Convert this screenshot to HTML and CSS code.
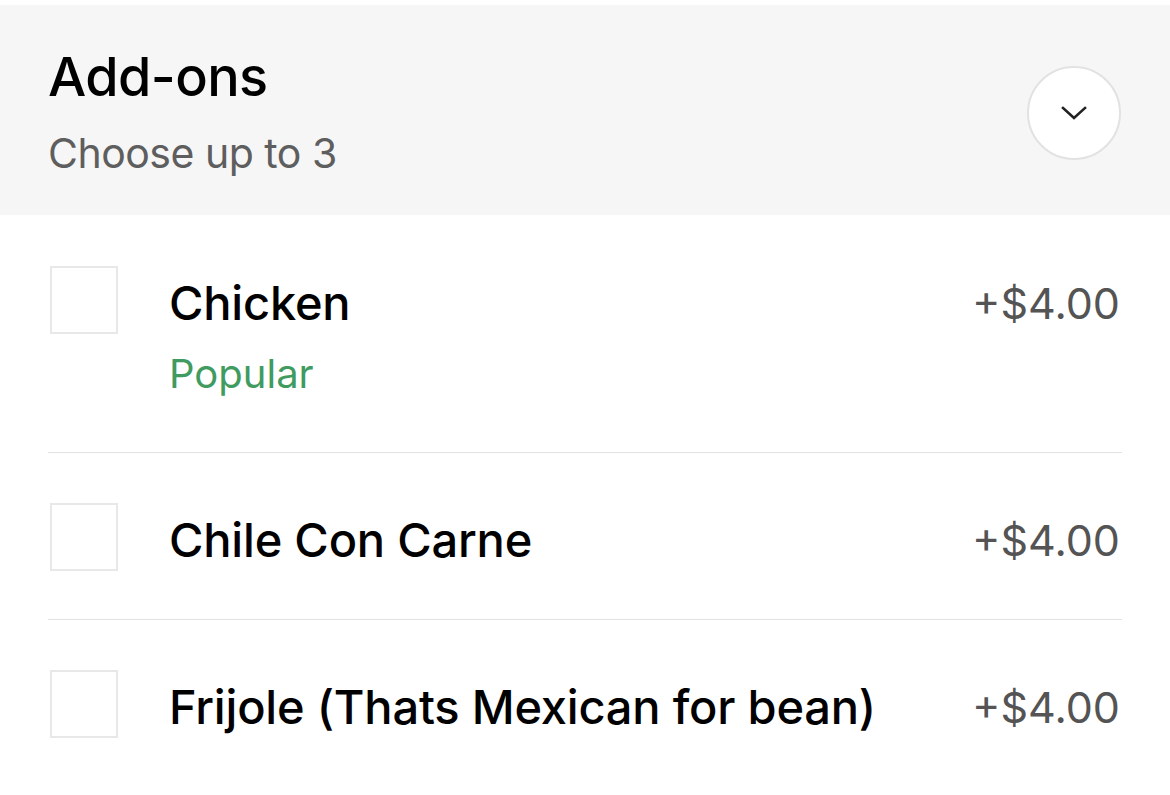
FILE: index.html
```html
<!DOCTYPE html>
<html lang="en">
<head>
<meta charset="utf-8">
<title>Add-ons</title>
<link rel="stylesheet" href="styles.css">
</head>
<body>
<section class="group">
  <header class="group-header">
    <div class="group-titles">
      <h2 class="group-title">Add-ons</h2>
      <p class="group-sub">Choose up to 3</p>
    </div>
    <button class="collapse-btn" aria-label="Collapse">
      <svg width="26" height="16" viewBox="0 0 26 16" aria-hidden="true">
        <path d="M2 3 L13 13 L24 3" fill="none" stroke="#222" stroke-width="2.6" stroke-linecap="square" stroke-linejoin="miter"/>
      </svg>
    </button>
  </header>
  <ul class="options">
    <li class="option">
      <span class="checkbox"></span>
      <div class="option-text">
        <span class="option-name">Chicken</span>
        <span class="option-tag">Popular</span>
      </div>
      <span class="option-price">+$4.00</span>
    </li>
    <li class="option">
      <span class="checkbox"></span>
      <div class="option-text">
        <span class="option-name">Chile Con Carne</span>
      </div>
      <span class="option-price">+$4.00</span>
    </li>
    <li class="option">
      <span class="checkbox"></span>
      <div class="option-text">
        <span class="option-name">Frijole (Thats Mexican for bean)</span>
      </div>
      <span class="option-price">+$4.00</span>
    </li>
  </ul>
</section>
</body>
</html>
```
FILE: styles.css
```css
* { box-sizing: border-box; }
html, body { margin: 0; padding: 0; background: #fff; }
body {
  padding-top: 5px;
  font-family: Inter, "Noto Sans", "Liberation Sans", sans-serif;
  color: #000;
}
.group-header {
  display: flex;
  align-items: center;
  justify-content: space-between;
  background: #f6f6f6;
  padding: 40px 49px 34px 48px;
  height: 210px;
}
.group-titles { display: flex; flex-direction: column; gap: 16px; }
.group-title {
  margin: 0;
  font-size: 54px;
  line-height: 64px;
  font-weight: 500;
  letter-spacing: -0.6px;
}
.group-sub {
  margin: 0;
  font-size: 41px;
  line-height: 56px;
  font-weight: 400;
  letter-spacing: -0.5px;
  color: #5e5e5e;
}
.collapse-btn {
  width: 94px;
  height: 94px;
  border-radius: 50%;
  border: 2px solid #e2e2e2;
  background: #fff;
  display: flex;
  align-items: center;
  justify-content: center;
  padding: 0;
  margin-top: -1px;
}
.options {
  list-style: none;
  margin: 0;
  padding: 0 48px;
}
.option {
  display: flex;
  align-items: flex-start;
  padding: 50px 0 48px;
  border-top: 1.5px solid #e2e2e2;
}
.option:first-child { border-top: none; padding-top: 51px; }
.checkbox {
  flex: none;
  width: 68px;
  height: 68px;
  margin-left: 2px;
  border: 2px solid #e8e8e8;
  background: #fff;
}
.option-text {
  flex: 1;
  display: flex;
  flex-direction: column;
  padding-left: 51px;
  margin-top: 3px;
  margin-bottom: -3px;
}
.option-name {
  font-size: 47px;
  line-height: 68px;
  font-weight: 500;
  letter-spacing: -0.2px;
}
.option-tag {
  font-size: 40px;
  line-height: 52px;
  color: #3f9b60;
  margin: 11px 0 7px;
}
.option-price {
  flex: none;
  font-size: 43px;
  line-height: 68px;
  color: #545454;
  margin: 3px 2px -3px 0;
}
```
